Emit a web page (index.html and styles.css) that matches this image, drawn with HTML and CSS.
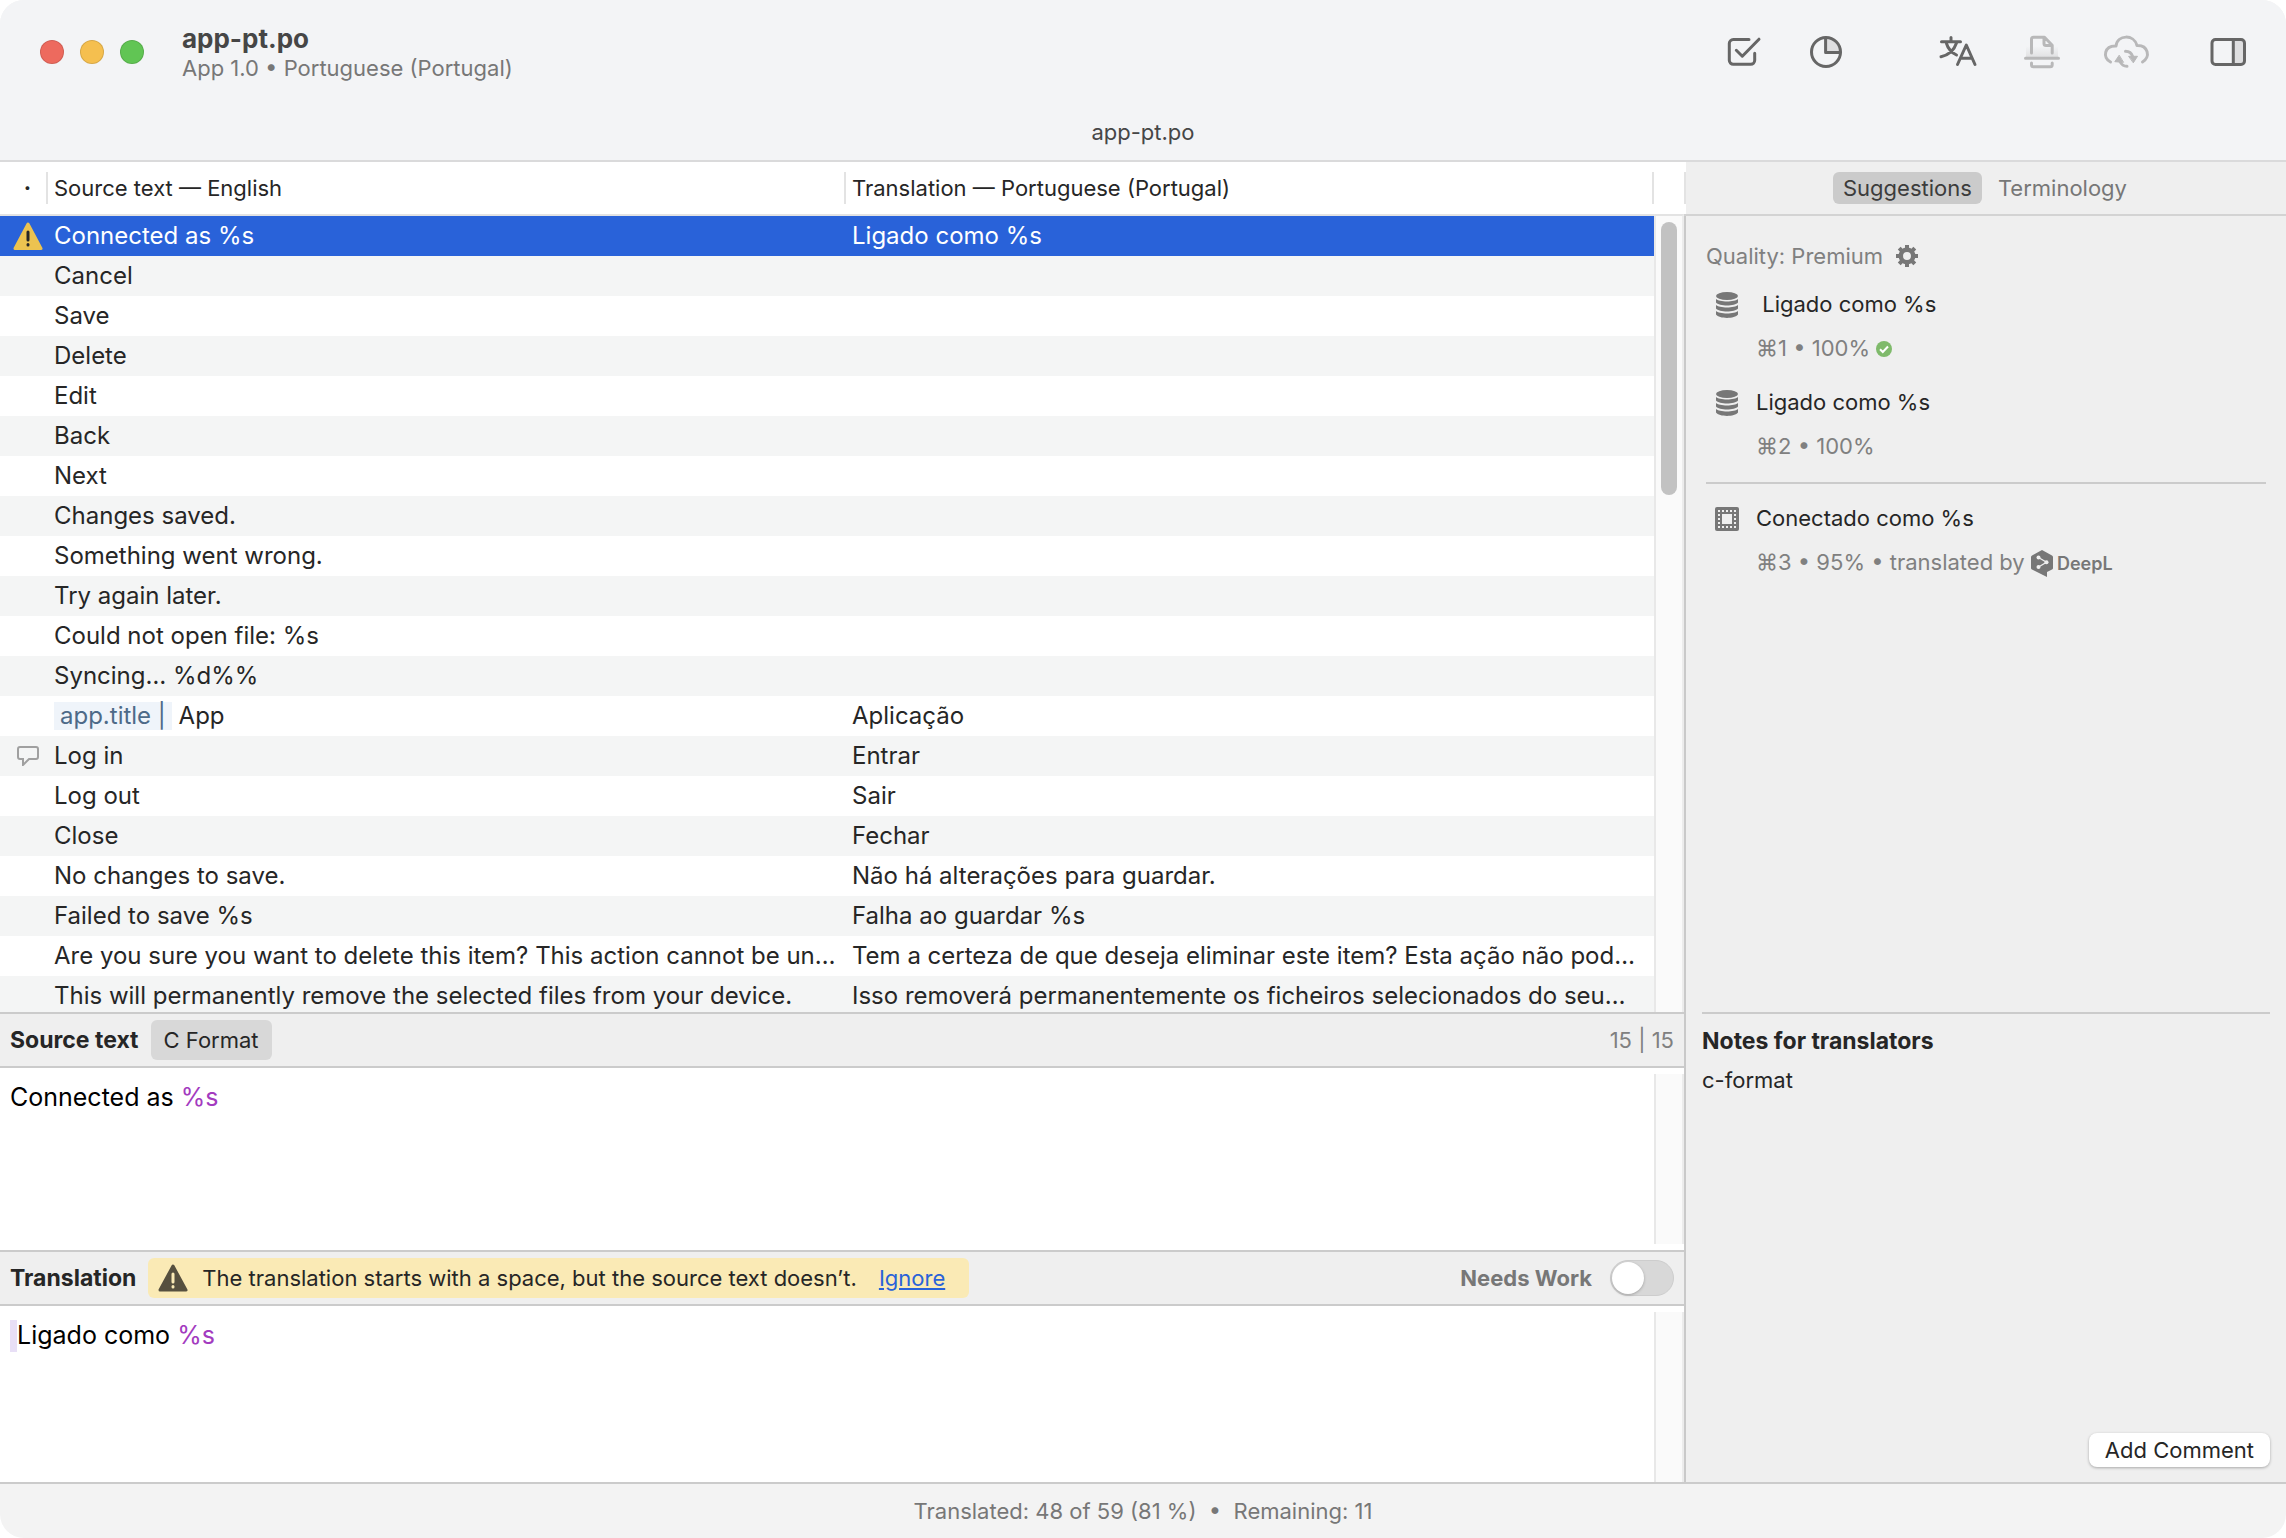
FILE: index.html
```html
<!DOCTYPE html>
<html lang="en">
<head>
    <meta charset="UTF-8">
    <meta name="viewport" content="width=device-width, initial-scale=1.0">
    <title>app-pt.po</title>
    <link rel="stylesheet" href="styles.css">
</head>
<body>
    <div class="window">
        <header class="titlebar">
            <div class="toolbar">
                <div class="lights">
                    <button class="light red" aria-label="Close"></button>
                    <button class="light yellow" aria-label="Minimize"></button>
                    <button class="light green" aria-label="Zoom"></button>
                </div>
                <div class="title">
                    <h1>app-pt.po</h1>
                    <p>App 1.0 • Portuguese (Portugal)</p>
                </div>
                <div class="tools">
                    <button class="tool" aria-label="Validate">
                        <svg viewBox="0 0 48 40"><path d="M31 7.600H15.300a4 4 0 0 0-4 4v16.700a4 4 0 0 0 4 4h17.400a4 4 0 0 0 4-4v-7M18.300 18.300l6 5.900L41 7.200"/></svg>
                    </button>
                    <button class="tool" aria-label="Statistics">
                        <svg viewBox="0 0 48 40"><path class="shade" d="M24 5.500V20h14.500A14.500 14.500 0 0 0 24 5.500z"/><circle cx="24" cy="20" r="14.500"/><path d="M23.600 6v14.500H38"/></svg>
                    </button>
                    <button class="tool group" aria-label="Pre-translate">
                        <svg viewBox="0 0 48 40"><path d="M7.500 9.700h19M17 5.500v4M12.500 11.500c1.500 5 5 9 10 11.500M22.500 11c-2.500 7.500-7.500 12-15.500 13.700M23.500 32.500l8.800-19.500L41 32.500M26.500 26.300h11.500"/></svg>
                    </button>
                    <button class="tool" aria-label="Update from source" disabled>
                        <svg viewBox="0 0 48 40">
                            <defs><linearGradient id="fade" x1="0" y1="0" x2="0" y2="1"><stop offset="0" stop-color="#bbb" stop-opacity="0"/><stop offset="1" stop-color="#bbb" stop-opacity=".35"/></linearGradient></defs>
                            <rect x="8" y="14" width="32" height="12" fill="url(#fade)" stroke="none"/>
                            <path d="M13.500 21V7.300a2 2 0 0 1 2-2H26.500l7.700 8V21M26 5.500v6a2 2 0 0 0 2 2h6M7.500 26.300h33M13.500 31v1.700a2 2 0 0 0 2 2h16.700a2 2 0 0 0 2-2V31"/>
                        </svg>
                    </button>
                    <button class="tool" aria-label="Sync" disabled>
                        <svg viewBox="0 0 48 40"><path d="M8.500 30C0 25.500 2.500 13.500 14 14 15.500 2.500 32 2 35 13.500 46 13 49 25 40.500 30M18 29.500c1.500 3.300 4 4.800 7 4.800M23.500 19.300c3.500 0 6 1.700 7 5"/><path class="solid" d="M17 23.500l-4.200 6.200 8.400.600zM27 24.300h8.500l-4 6.200z"/></svg>
                    </button>
                    <button class="tool sidebar-toggle" aria-label="Sidebar">
                        <svg viewBox="0 0 48 40"><path class="shade" d="M29.300 7.500h8.200a3 3 0 0 1 3 3v19a3 3 0 0 1-3 3h-8.200z"/><rect x="8" y="7.500" width="32.500" height="25" rx="3.500"/><path d="M29.300 7.500v25"/></svg>
                    </button>
                </div>
            </div>
            <div class="filetab">app-pt.po</div>
        </header>

        <main class="content">
            <section class="left">
                <div class="catalog">
                    <table class="messages">
                        <colgroup>
                            <col class="col-icon">
                            <col class="col-source">
                            <col>
                        </colgroup>
                        <thead>
                            <tr>
                                <th class="dot">·</th>
                                <th><span>Source text — English</span></th>
                                <th><span class="last">Translation — Portuguese (Portugal)</span></th>
                            </tr>
                        </thead>
                        <tbody>
                            <tr class="selected">
                                <td class="icon"><svg width="30" height="28" viewBox="0 0 30 28"><path d="M15 2 28 26.500H2z" fill="#ecc350" stroke="#ecc350" stroke-width="3" stroke-linejoin="round"/><path d="M15 10v8M15 22.500v.5" stroke="#262626" stroke-width="3" stroke-linecap="round"/></svg></td>
                                <td>Connected as %s</td><td>Ligado como %s</td>
                            </tr>
                            <tr><td></td><td>Cancel</td><td></td></tr>
                            <tr><td></td><td>Save</td><td></td></tr>
                            <tr><td></td><td>Delete</td><td></td></tr>
                            <tr><td></td><td>Edit</td><td></td></tr>
                            <tr><td></td><td>Back</td><td></td></tr>
                            <tr><td></td><td>Next</td><td></td></tr>
                            <tr><td></td><td>Changes saved.</td><td></td></tr>
                            <tr><td></td><td>Something went wrong.</td><td></td></tr>
                            <tr><td></td><td>Try again later.</td><td></td></tr>
                            <tr><td></td><td>Could not open file: %s</td><td></td></tr>
                            <tr><td></td><td>Syncing… %d%%</td><td></td></tr>
                            <tr><td></td><td><span class="context">app.title |</span> App</td><td>Aplicação</td></tr>
                            <tr>
                                <td class="icon"><svg width="22" height="20" viewBox="0 0 22 20"><path d="M3 1h16a2 2 0 0 1 2 2v8a2 2 0 0 1-2 2h-7l-6 6v-6H3a2 2 0 0 1-2-2V3a2 2 0 0 1 2-2z" fill="none" stroke="#a0a0a0" stroke-width="2"/></svg></td>
                                <td>Log in</td><td>Entrar</td>
                            </tr>
                            <tr><td></td><td>Log out</td><td>Sair</td></tr>
                            <tr><td></td><td>Close</td><td>Fechar</td></tr>
                            <tr><td></td><td>No changes to save.</td><td>Não há alterações para guardar.</td></tr>
                            <tr><td></td><td>Failed to save %s</td><td>Falha ao guardar %s</td></tr>
                            <tr><td></td><td>Are you sure you want to delete this item? This action cannot be un…</td><td>Tem a certeza de que deseja eliminar este item? Esta ação não pod…</td></tr>
                            <tr><td></td><td>This will permanently remove the selected files from your device.</td><td>Isso removerá permanentemente os ficheiros selecionados do seu…</td></tr>
                        </tbody>
                    </table>
                    <div class="scroll">
                        <div class="track"><div class="thumb"></div></div>
                    </div>
                </div>

                <div class="bar">
                    <h2>Source text</h2>
                    <span class="tag">C Format</span>
                    <span class="count">15 | 15</span>
                </div>
                <div class="editor">
                    <div class="text">Connected as <span class="format">%s</span></div>
                    <div class="track"></div>
                </div>

                <div class="bar">
                    <h2 id="translation">Translation</h2>
                    <div class="warning">
                        <svg width="30" height="28" viewBox="0 0 30 28"><path d="M15 2 28 26H2z" fill="#56503f" stroke="#56503f" stroke-width="3" stroke-linejoin="round"/><path d="M15 10v8M15 22.500v.5" stroke="#faeab5" stroke-width="3" stroke-linecap="round"/></svg>
                        <span>The translation starts with a space, but the source text doesn’t.</span>
                        <a href="#">Ignore</a>
                    </div>
                    <label class="needs-work" for="needsWork">Needs Work</label>
                    <input class="switch" type="checkbox" role="switch" id="needsWork">
                </div>
                <div class="editor">
                    <div class="text" contenteditable="true" role="textbox" aria-labelledby="translation" spellcheck="false"><span class="space"> </span>Ligado como <span class="format">%s</span></div>
                    <div class="track"></div>
                </div>
            </section>

            <aside class="sidebar">
                <div class="tabs">
                    <button class="active">Suggestions</button>
                    <button>Terminology</button>
                </div>
                <div class="panel">
                    <div class="suggestions">
                        <div class="quality">Quality: Premium
                            <button aria-label="Quality settings"><svg width="24" height="24" viewBox="0 0 24 24"><circle cx="12" cy="12" r="6.200" fill="none" stroke="#777" stroke-width="4.500"/><path d="M12 1v4M12 19v4M1 12h4M19 12h4M4.200 4.200 7 7M17 17l2.800 2.800M4.200 19.800 7 17M17 7l2.800-2.800" stroke="#777" stroke-width="4"/></svg></button>
                        </div>
                        <div class="suggestion">
                            <svg class="db" viewBox="0 0 24 28"><use href="#db"/></svg>
                            <div>
                                <p class="match"> Ligado como %s</p>
                                <p class="meta">⌘1 • 100% <svg width="16" height="16" viewBox="0 0 16 16"><circle cx="8" cy="8" r="8" fill="#7fba6b"/><path d="M4 8.200 6.800 11 12 5.500" fill="none" stroke="#fff" stroke-width="2"/></svg></p>
                            </div>
                        </div>
                        <div class="suggestion">
                            <svg class="db" viewBox="0 0 24 28">
                                <g id="db" fill="#777">
                                    <ellipse cx="12" cy="5" rx="11" ry="4"/>
                                    <path d="M1 8c3 3.300 19 3.300 22 0v3.500c-3 4-19 4-22 0zM1 14c3 3.300 19 3.300 22 0v3.500c-3 4-19 4-22 0zM1 20c3 3.300 19 3.300 22 0v3.500c-3 4.500-19 4.500-22 0z"/>
                                </g>
                            </svg>
                            <div>
                                <p class="match">Ligado como %s</p>
                                <p class="meta">⌘2 • 100%</p>
                            </div>
                        </div>
                        <hr>
                        <div class="suggestion">
                            <svg class="db" viewBox="0 0 24 28"><rect y="2" width="24" height="24" rx="2" fill="#777"/><rect x="4" y="6" width="16" height="16" fill="none" stroke="#efefef" stroke-width="2" stroke-dasharray="2 2" stroke-dashoffset="1"/><rect x="7" y="9" width="10" height="10" fill="#efefef"/></svg>
                            <div>
                                <p class="match">Conectado como %s</p>
                                <p class="meta">⌘3 • 95% • translated by <svg class="deepl" width="22" height="27" viewBox="0 0 22 27"><path d="M11 0l10 5.500q1 .5 1 1.500v11q0 1-1 1.500L16 22v5l-6-3L1 19.500q-1-.5-1-1.500V7q0-1 1-1.500z" fill="#777"/><path d="M7.500 7.500l8 4.700-8 4.800" fill="none" stroke="#efefef" stroke-width="1.300"/><g fill="#efefef"><circle cx="7.500" cy="7.500" r="2"/><circle cx="15.500" cy="12.200" r="2"/><circle cx="7.500" cy="17" r="2"/></g></svg><b>DeepL</b></p>
                            </div>
                        </div>
                    </div>
                    <div class="notes">
                        <h2>Notes for translators</h2>
                        <p>c-format</p>
                        <button class="comment">Add Comment</button>
                    </div>
                </div>
            </aside>
        </main>

        <footer class="status">Translated: 48 of 59 (81 %)&nbsp; • &nbsp;Remaining: 11</footer>
    </div>
</body>
</html>
```
FILE: styles.css
```css
* {
    box-sizing: border-box;
    margin: 0;
    padding: 0;
}

body {
    font-family: Inter, "Liberation Sans", sans-serif;
    font-size: 22px;
    color: #262626;
    background: #fff;
}

button {
    font: inherit;
    color: inherit;
    background: none;
    border: none;
}

h2 {
    font-size: 23px;
    font-weight: bold;
}

.window {
    display: flex;
    flex-direction: column;
    height: 100vh;
    border-radius: 24px;
    overflow: hidden;
    background: #f3f3f3;
}

/* Title bar */
.titlebar {
    background: #f3f4f6;
    height: 162px;
    border-bottom: 2px solid #dadadb;
}

.toolbar {
    display: flex;
    align-items: center;
    height: 104px;
    padding: 0 34px 0 40px;
}

.lights {
    display: flex;
    gap: 16px;
}

.light {
    width: 24px;
    height: 24px;
    border-radius: 50%;
    border: 1px solid rgba(0, 0, 0, 0.12);
}

.red {
    background: #ed6a5e;
}

.yellow {
    background: #f5bf4f;
}

.green {
    background: #61c554;
}

.title {
    margin-left: 38px;
    padding-top: 2px;
}

.title h1 {
    font-size: 26px;
    line-height: 30px;
    color: #464646;
}

.title p {
    line-height: 28px;
    color: #777;
}

.tools {
    display: flex;
    gap: 36px;
    margin-left: auto;
}

.tool {
    width: 48px;
    height: 40px;
    color: #666;
}

.tool svg {
    display: block;
    fill: none;
    stroke: currentColor;
    stroke-width: 3;
    stroke-linecap: round;
    stroke-linejoin: round;
}

.tool:disabled {
    color: #b8b8b9;
}

.tool .shade {
    fill: #dedee0;
    stroke: none;
}

.tool .solid {
    fill: currentColor;
    stroke-width: 1;
}

.group {
    margin-left: 48px;
}

.sidebar-toggle {
    margin-left: 18px;
}

.filetab {
    height: 56px;
    line-height: 56px;
    text-align: center;
    color: #464646;
}

/* Main area */
.content {
    flex: 1;
    min-height: 0;
    display: grid;
    grid-template-columns: 1fr 602px;
}

.left {
    display: flex;
    flex-direction: column;
    min-width: 0;
    min-height: 0;
    background: #fff;
}

.catalog {
    flex: 1;
    min-height: 0;
    display: flex;
    overflow: hidden;
}

.messages {
    flex: 1;
    min-width: 0;
    align-self: flex-start;
    table-layout: fixed;
    border-spacing: 0;
}

.col-icon {
    width: 46px;
}

.col-source {
    width: 798px;
}

.messages th {
    height: 54px;
    border-bottom: 2px solid #e3e3e3;
    font-weight: normal;
    text-align: left;
}

.messages th.dot {
    padding-left: 9px;
    text-align: center;
    font-weight: bold;
}

.messages th span {
    display: block;
    height: 32px;
    line-height: 32px;
    padding-left: 6px;
    border-left: 2px solid #e3e3e3;
}

.messages th span.last {
    border-right: 2px solid #e3e3e3;
}

.messages td {
    height: 40px;
    line-height: 40px;
    padding-left: 8px;
    font-size: 24px;
    white-space: nowrap;
    overflow: hidden;
}

.messages td.icon {
    padding-left: 9px;
    line-height: 0;
    text-align: center;
}

.icon svg {
    display: inline-block;
    vertical-align: middle;
}

.messages tbody tr:nth-child(even) {
    background: #f4f5f5;
}

.messages .selected {
    background: #2962d9;
    color: #fff;
}

.context {
    display: inline-block;
    height: 28px;
    line-height: 28px;
    padding: 0 6px;
    background: #eff4fa;
    color: #4d6a88;
}

.scroll {
    flex: none;
    width: 30px;
    display: flex;
    flex-direction: column;
    padding-top: 52px;
}

.scroll .track {
    flex: 1;
    margin: 0;
    border-top: 2px solid #e3e3e3;
}

.track {
    flex: none;
    width: 30px;
    margin: 6px 0;
    background: #fafafa;
    border-left: 2px solid #e8e8e8;
    border-right: 2px solid #ececec;
}

.thumb {
    width: 16px;
    height: 273px;
    margin: 6px auto;
    border-radius: 8px;
    background: #c2c2c2;
}

.bar {
    flex: none;
    display: flex;
    align-items: center;
    height: 56px;
    padding: 0 10px;
    background: #efefef;
    border-top: 2px solid #cbcbcb;
    border-bottom: 2px solid #cbcbcb;
}

.tag {
    height: 40px;
    line-height: 40px;
    margin-left: 12px;
    padding: 0 13px;
    border-radius: 6px;
    background: #d8d8d8;
}

.count {
    margin-left: auto;
    color: #808080;
}

.warning {
    display: flex;
    align-items: center;
    height: 40px;
    margin-left: 12px;
    padding: 0 24px 0 10px;
    border-radius: 6px;
    background: #faeab5;
}

.warning span {
    margin: 0 22px 0 14px;
}

.warning a {
    color: #2962d9;
}

.needs-work {
    margin-left: auto;
    font-weight: bold;
    color: #777;
}

.switch {
    appearance: none;
    width: 64px;
    height: 36px;
    margin-left: 18px;
    padding: 1px;
    border: 1px solid #cdcdcd;
    border-radius: 18px;
    background: #d8d8d8;
}

.switch::before {
    content: "";
    display: block;
    width: 32px;
    height: 32px;
    border-radius: 50%;
    background: #fff;
    box-shadow: 0 1px 3px rgba(0, 0, 0, 0.25);
}

.switch:checked::before {
    margin-left: auto;
}

.editor {
    flex: none;
    display: flex;
    height: 182px;
}

.editor:last-child {
    height: 176px;
}

.editor:last-child .track {
    margin-bottom: 0;
}

.text {
    flex: 1;
    padding: 12px 10px;
    font-size: 25px;
    line-height: 34px;
    color: #000;
    outline: none;
}

.format {
    color: #a33bbf;
}

.space {
    display: inline-block;
    height: 32px;
    white-space: pre;
    vertical-align: bottom;
    background: #e8dff6;
}

/* Sidebar */
.sidebar {
    display: flex;
    flex-direction: column;
    min-height: 0;
    background: #efefef;
}

.tabs {
    display: flex;
    align-items: center;
    justify-content: center;
    gap: 6px;
    height: 54px;
    border-bottom: 2px solid #d3d3d3;
    background: linear-gradient(#e3e3e3, #e3e3e3) 0 10px / 2px 32px no-repeat, linear-gradient(#fff, #fff) 0 0 / 2px 54px no-repeat;
}

.tabs button {
    height: 32px;
    line-height: 32px;
    padding: 0 10px;
    border-radius: 6px;
    color: #777;
}

.tabs .active {
    color: #3c3c3c;
    background: #cbcbcb;
}

.panel {
    flex: 1;
    min-height: 0;
    display: flex;
    flex-direction: column;
    border-left: 2px solid #c9c9c9;
    padding: 0 16px;
}

.suggestions {
    flex: 1;
    padding: 24px 4px 0;
}

.quality {
    display: flex;
    align-items: center;
    gap: 12px;
    height: 32px;
    margin-bottom: 10px;
    color: #808080;
}

.quality button {
    height: 24px;
}

.quality svg {
    display: block;
}

.suggestion {
    display: flex;
    gap: 17px;
    margin: 0 0 10px 9px;
}

.db {
    flex: none;
    width: 24px;
    height: 28px;
    margin-top: 9px;
}

.match {
    line-height: 44px;
    white-space: pre;
}

.meta {
    line-height: 44px;
    color: #808080;
}

.meta svg {
    vertical-align: -1px;
}

.meta .deepl {
    margin: 0 4px 0 0;
    vertical-align: -7px;
}

.meta b {
    font-size: 18px;
    font-weight: 600;
    color: #777;
}

.suggestions hr {
    height: 2px;
    margin: 14px 0 12px;
    border: none;
    background: #cbcbcb;
}

.notes {
    display: flex;
    flex-direction: column;
    height: 470px;
    padding: 8px 0 15px;
    border-top: 2px solid #cbcbcb;
}

.notes h2 {
    line-height: 38px;
}

.notes p {
    line-height: 40px;
}

.comment {
    align-self: flex-end;
    height: 34px;
    margin-top: auto;
    padding: 0 16px;
    border-radius: 8px;
    background: #fff;
    box-shadow: 0 1px 3px rgba(0, 0, 0, 0.3);
}

.status {
    height: 56px;
    line-height: 54px;
    border-top: 2px solid #cbcbcb;
    text-align: center;
    color: #777;
}
```
